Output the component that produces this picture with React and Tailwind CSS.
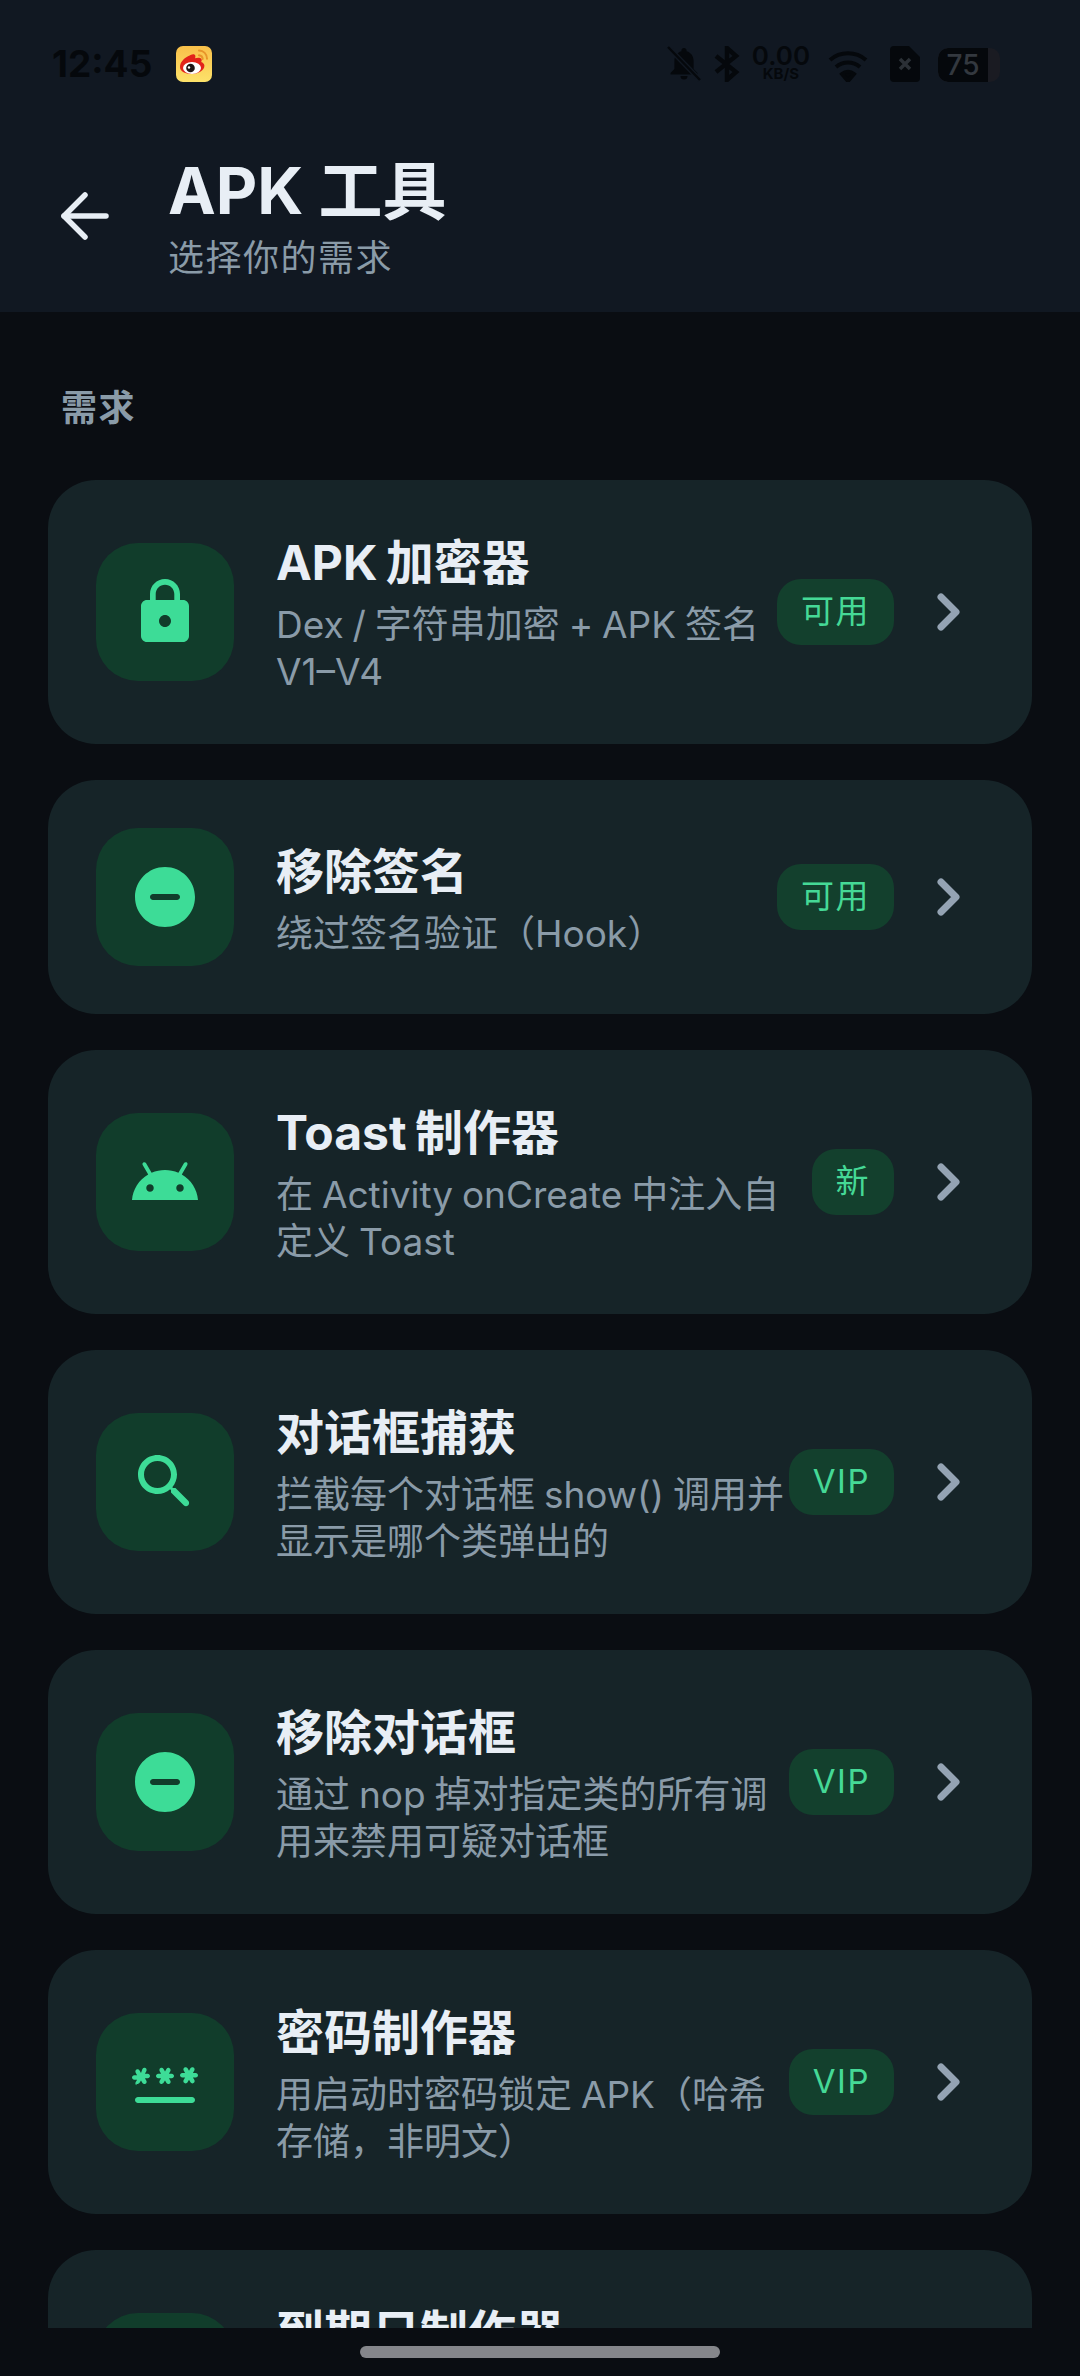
import React from "react";

// Material-style glyph paths used by the tool cards
const PATHS = {
  lock: "M18 8h-1V6c0-2.76-2.24-5-5-5S7 3.24 7 6v2H6c-1.1 0-2 .9-2 2v10c0 1.1.9 2 2 2h12c1.1 0 2-.9 2-2V10c0-1.1-.9-2-2-2zm-6 9c-1.1 0-2-.9-2-2s.9-2 2-2 2 .9 2 2-.9 2-2 2zm3.1-9H8.9V6c0-1.71 1.39-3.1 3.1-3.1 1.71 0 3.1 1.39 3.1 3.1v2z",
  minus: "M12 2C6.48 2 2 6.48 2 12s4.48 10 10 10 10-4.48 10-10S17.52 2 12 2zm4 11H8c-.55 0-1-.45-1-1s.45-1 1-1h8c.55 0 1 .45 1 1s-.45 1-1 1z",
  android: "M17.6 9.48l1.84-3.18c.16-.31.04-.69-.26-.85-.29-.15-.65-.06-.83.22l-1.88 3.24c-2.86-1.21-6.08-1.21-8.94 0L5.65 5.67c-.19-.29-.58-.38-.87-.2-.28.18-.37.54-.22.83L6.4 9.48C3.3 11.25 1.28 14.44 1 18h22c-.28-3.56-2.3-6.75-5.4-8.52zM7 15.25c-.69 0-1.25-.56-1.25-1.25s.56-1.25 1.25-1.25 1.25.56 1.25 1.25-.56 1.25-1.25 1.25zm10 0c-.69 0-1.25-.56-1.25-1.25s.56-1.25 1.25-1.25 1.25.56 1.25 1.25-.56 1.25-1.25 1.25z",
  search: "M15.5 14h-.79l-.28-.27C15.41 12.59 16 11.11 16 9.5 16 5.91 13.09 3 9.5 3S3 5.91 3 9.5 5.91 16 9.5 16c1.61 0 3.09-.59 4.23-1.57l.27.28v.79l4.25 4.25c.41.41 1.08.41 1.49 0 .41-.41.41-1.08 0-1.49L15.5 14zm-6 0C7.01 14 5 11.99 5 9.5S7.01 5 9.5 5 14 7.01 14 9.5 11.99 14 9.5 14z",
  password: "M3 17h18c.55 0 1 .45 1 1s-.45 1-1 1H3c-.55 0-1-.45-1-1s.45-1 1-1zm-.5-4.43c.36.21.82.08 1.03-.28l.47-.82.48.83c.21.36.67.48 1.03.28.36-.21.48-.66.28-1.02l-.49-.84h.95c.41 0 .75-.34.75-.75s-.34-.75-.75-.75H5.3l.47-.82c.21-.36.08-.82-.27-1.03-.36-.2-.82-.08-1.03.28L4 8.97l-.47-.82c-.21-.36-.67-.48-1.03-.28-.36.21-.48.67-.27 1.03l.47.82h-.95c-.41 0-.75.34-.75.75s.34.75.75.75h.95l-.48.83c-.2.36-.08.82.28 1.02zm8 0c.36.21.82.08 1.03-.28l.47-.82.48.83c.21.36.67.48 1.03.28.36-.21.48-.66.28-1.02l-.48-.83h.95c.41 0 .75-.34.75-.75s-.34-.75-.75-.75h-.96l.47-.82c.21-.36.08-.82-.27-1.03-.36-.2-.82-.08-1.03.28l-.47.81-.47-.82c-.21-.36-.67-.48-1.03-.28-.36.21-.48.67-.27 1.03l.47.82h-.95c-.41 0-.75.34-.75.75s.34.75.75.75h.95l-.48.83c-.2.36-.08.82.28 1.02zM23 9.75c0-.41-.34-.75-.75-.75h-.95l.47-.82c.21-.36.08-.82-.27-1.03-.36-.2-.82-.08-1.03.28l-.47.82-.47-.82c-.21-.36-.67-.48-1.03-.28-.36.21-.48.67-.27 1.03l.47.82h-.95c-.41 0-.75.34-.75.75s.34.75.75.75h.95l-.48.83c-.21.36-.08.82.28 1.03.36.21.82.08 1.03-.28l.47-.82.48.83c.21.36.67.48 1.03.28.36-.21.48-.66.28-1.02l-.48-.83h.95c.4-.01.74-.35.74-.77z",
  event: "M19 4h-1V2h-2v2H8V2H6v2H5c-1.1 0-2 .9-2 2v14c0 1.1.9 2 2 2h14c1.1 0 2-.9 2-2V6c0-1.1-.9-2-2-2zm0 16H5V9h14v11z",
};

const TOOLS = [
  { icon: "lock", title: "APK 加密器", desc: "Dex / 字符串加密 + APK 签名 V1–V4", badge: "可用" },
  { icon: "minus", title: "移除签名", desc: "绕过签名验证（Hook）", badge: "可用" },
  { icon: "android", title: "Toast 制作器", desc: "在 Activity onCreate 中注入自定义 Toast", badge: "新" },
  { icon: "search", title: "对话框捕获", desc: "拦截每个对话框 show() 调用并显示是哪个类弹出的", badge: "VIP" },
  { icon: "minus", title: "移除对话框", desc: "通过 nop 掉对指定类的所有调用来禁用可疑对话框", badge: "VIP" },
  { icon: "password", title: "密码制作器", desc: "用启动时密码锁定 APK（哈希存储，非明文）", badge: "VIP" },
  { icon: "event", title: "到期日制作器", desc: "为 APK 设置到期日期，到期后无法启动", badge: "VIP" },
];

function Weibo() {
  return (
    <svg width="36" height="36" viewBox="0 0 36 36">
      <defs>
        <linearGradient id="wb" x1="0" y1="0" x2="0" y2="1">
          <stop offset="0" stopColor="#f9c04a" />
          <stop offset="1" stopColor="#fde26a" />
        </linearGradient>
      </defs>
      <rect width="36" height="36" rx="7" fill="url(#wb)" />
      <path d="M23 4.500c4.600.3 7.800 3.500 8 8.200" fill="none" stroke="#e8952a" strokeWidth="2" strokeLinecap="round" />
      <path d="M23 9.300c2.200.2 3.500 1.500 3.700 3.600" fill="none" stroke="#e8952a" strokeWidth="2" strokeLinecap="round" />
      <path d="M4 21c0-4.400 3.400-8.400 8-10.800 1.700-.9 4.600-2.600 6.400-1.800 1.500.7 1 2.800.6 3.800 2.200-.8 5.600-1 6.500 1 .5 1.200 0 2.200-.4 2.800 1.900.6 3.300 1.900 3.300 3.800 0 4.600-5.900 8.200-12.400 8.200S4 25.700 4 21z" fill="#e2231a" />
      <ellipse cx="16" cy="22" rx="9" ry="6" fill="#fff" />
      <circle cx="14.500" cy="22" r="4.300" fill="#201616" />
      <circle cx="13" cy="21.500" r="1.200" fill="#fff" />
    </svg>
  );
}

// System status icons are drawn in near-black over the dark header
function StatusBar() {
  const ink = "#05080c";
  return (
    <div className="h-[96px] pt-[46px] pl-[52px] pr-[80px] flex items-start text-[#05080c]">
      <span className="text-[37px] leading-[36px] font-bold w-[124px]">12:45</span>
      <Weibo />
      <div className="ml-auto flex items-start">
        <svg width="36" height="36" viewBox="0 0 36 36" fill={ink}>
          <path d="M18 2c-1.500 0-2.600 1.100-2.600 2.600v.7C10.800 6.500 8.400 10.400 8.400 15v8L4.500 27v1.500h27V27l-3.900-4v-8c0-4.600-2.400-8.500-7-9.700v-.7C20.600 3.100 19.500 2 18 2zM14.500 30a3.500 3.500 0 0 0 7 0z" />
          <path d="M2 1l32 33" stroke="#111822" strokeWidth="5" />
          <path d="M2 1l32 33" stroke={ink} strokeWidth="2.500" />
        </svg>
        <svg className="ml-[12px]" width="26" height="36" viewBox="0 0 26 36" fill="none" stroke={ink} strokeWidth="4.500">
          <path d="M2 10l20 16-9 8V2l9 8L2 26" />
        </svg>
        <div className="ml-[10px] w-[62px] flex flex-col items-center">
          <span className="text-[26px] leading-[20px] font-semibold">0.00</span>
          <span className="text-[15px] leading-[15px] font-bold">KB/S</span>
        </div>
        <svg className="ml-[16px] mt-[4px]" width="40" height="32" viewBox="0 0 40 32" fill="none" stroke={ink} strokeWidth="4">
          <path d="M2 10c10-9 26-9 36 0" />
          <path d="M8 17c7-6 17-6 24 0" />
          <path d="M14 24c3.500-3 8.500-3 12 0l-6 7z" fill={ink} />
        </svg>
        <svg className="ml-[22px]" width="30" height="36" viewBox="0 0 30 36">
          <path d="M4 0h15l11 11v21a4 4 0 0 1-4 4H4a4 4 0 0 1-4-4V4a4 4 0 0 1 4-4z" fill={ink} />
          <path d="M10 13l10 10M20 13L10 23" stroke="#2b3036" strokeWidth="3.500" />
        </svg>
        <div className="ml-[18px] w-[62px] h-[34px] mt-[2px] rounded-[10px] bg-[#1a1b22] overflow-hidden">
          <div className="w-[50px] h-full bg-[#05080c] rounded-l-[10px] flex items-center justify-center text-[28px] leading-none font-medium text-[#33383f]">75</div>
        </div>
      </div>
    </div>
  );
}

function ToolCard({ icon, title, desc, badge }) {
  return (
    <div className="flex items-center rounded-[48px] bg-[#162428] px-[48px] py-[48px]">
      <div className="w-[138px] h-[138px] shrink-0 rounded-[42px] bg-[#113d2b] flex items-center justify-center">
        <svg width="72" height="72" viewBox="0 0 24 24" fill="#3ddc97">
          <path d={PATHS[icon]} />
        </svg>
      </div>
      <div className="ml-[42px] flex-1 min-w-0">
        <div className="text-[48px] leading-[70px] font-bold [word-spacing:-3px] text-[#e8eef5]">{title}</div>
        <div className="mt-[3px] pb-[1px] text-[37px] leading-[47px] [word-spacing:-1.5px] text-[#8a9ba8]">{desc}</div>
      </div>
      <div className="shrink-0 h-[66px] px-[24px] rounded-[24px] bg-[#13402d] flex items-center text-[33px] tracking-[1.5px] text-[#45d996]">
        {badge}
      </div>
      <svg className="ml-[18px] shrink-0" width="72" height="72" viewBox="0 0 72 72" fill="none" stroke="#94a3b3" strokeWidth="7" strokeLinecap="round" strokeLinejoin="round">
        <path d="M29 21l15 15-15 15" />
      </svg>
    </div>
  );
}

export default function App() {
  return (
    <div className="w-[1080px] h-[2376px] flex flex-col overflow-hidden bg-[#0a0d12] font-['Inter','Noto_Sans_CJK_SC',sans-serif]">
      <header className="h-[312px] shrink-0 bg-[#111822]">
        <StatusBar />
        <div className="flex items-start pl-[61px] pt-[57px]">
          <svg className="mt-[39px]" width="48" height="48" viewBox="0 0 48 48" fill="none" stroke="#e8eef5" strokeWidth="5.500" strokeLinecap="round" strokeLinejoin="round">
            <path d="M3 24h42" />
            <path d="M24 3L3 24l21 21" />
          </svg>
          <div className="ml-[59px]">
            <h1 className="text-[64px] leading-[76px] font-bold text-[#e8eef5]">APK 工具</h1>
            <p className="mt-[9px] text-[36px] leading-[40px] tracking-[1.5px] text-[#8a9ba8]">选择你的需求</p>
          </div>
        </div>
      </header>
      <main className="flex-1 min-h-0 overflow-hidden px-[48px]">
        <h2 className="mt-[73px] ml-[13px] text-[36px] leading-[46px] font-semibold tracking-[1.5px] text-[#8a9ba8]">需求</h2>
        <div className="mt-[49px] flex flex-col gap-[36px]">
          {TOOLS.map((t) => (
            <ToolCard key={t.title} {...t} />
          ))}
        </div>
      </main>
      <footer className="h-[48px] shrink-0 flex items-center justify-center">
        <div className="w-[360px] h-[12px] rounded-full bg-[#85868b]" />
      </footer>
    </div>
  );
}
